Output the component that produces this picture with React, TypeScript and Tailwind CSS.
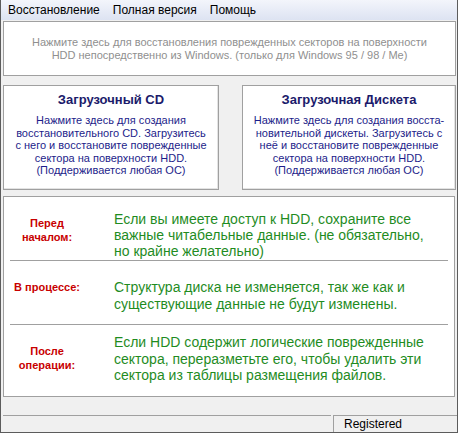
const FONT = { fontFamily: '"Liberation Sans", Arial, sans-serif' }

const MENU = ['Восстановление', 'Полная версия', 'Помощь']

function BootBox({ title, lines }: { title: string; lines: string[] }) {
  return (
    <div className="flex h-[105px] flex-col items-center border border-[#a0a0a0] bg-white shadow-[inset_-1px_-1px_0_#e3e3e3]">
      <div className="mt-[6px] text-[13px] font-bold leading-[16px] text-[#1b1b6b]">{title}</div>
      <div className="mt-[6px] text-center text-[11px] leading-[12.6px] text-[#1d1d8a]">
        {lines.map((l) => (
          <div key={l}>{l}</div>
        ))}
      </div>
    </div>
  )
}

function Row({
  label,
  text,
  textTop,
  height,
}: {
  label: string[]
  text: string[]
  textTop: string
  height: string
}) {
  return (
    <div className={`flex items-start ${height}`}>
      <div className="w-[86px] pt-[19px] text-center text-[11px] font-bold leading-[14px] text-[#c80000]">
        {label.map((l) => (
          <div key={l}>{l}</div>
        ))}
      </div>
      <div className={`ml-[24px] whitespace-nowrap text-[14px] text-[#1f8c1f] ${textTop}`}>
        {text.map((l) => (
          <div key={l}>{l}</div>
        ))}
      </div>
    </div>
  )
}

export default function App() {
  return (
    <div className="h-[433px] w-[460px] bg-white" style={FONT}>
      <div className="flex h-[433px] w-[458px] flex-col border-x border-b border-[#5c5c5c] bg-[#f0f0f0]">
        <div className="flex h-[20px] items-center bg-gradient-to-b from-[#f3f5fb] to-[#dde3f2] pl-[7px] text-[12px] text-black">
          {MENU.map((m) => (
            <span key={m} className="mr-[13px]">
              {m}
            </span>
          ))}
        </div>

        <div className="ml-[2px] mr-[1px] mt-[1px] flex h-[55px] flex-col items-center justify-center border border-[#a0a0a0] bg-white text-center text-[11px] leading-[13px] text-[#8f8f8f]">
          <div>Нажмите здесь для восстановления поврежденных секторов на поверхности</div>
          <div>HDD непосредственно из Windows. (только для Windows 95 / 98 / Me)</div>
        </div>

        <div className="ml-[2px] mr-[1px] mt-[9px] grid grid-cols-[216px_214px] justify-between">
          <BootBox
            title="Загрузочный CD"
            lines={[
              'Нажмите здесь для создания',
              'восстановительного CD. Загрузитесь',
              'с него и восстановите поврежденные',
              'сектора на поверхности HDD.',
              '(Поддерживается любая ОС)',
            ]}
          />
          <BootBox
            title="Загрузочная Дискета"
            lines={[
              'Нажмите здесь для создания восста-',
              'новительной дискеты. Загрузитесь с',
              'неё и восстановите поврежденные',
              'сектора на поверхности HDD.',
              '(Поддерживается любая ОС)',
            ]}
          />
        </div>

        <div className="ml-[2px] mr-[2px] mt-[6px] flex h-[201px] flex-col border border-[#a0a0a0] bg-white">
          <Row
            label={['Перед', 'началом:']}
            text={[
              'Если вы имеете доступ к HDD, сохраните все',
              'важные читабельные данные. (не обязательно,',
              'но крайне желательно)',
            ]}
            textTop="pt-[14px] leading-[16px]"
            height="h-[63px]"
          />
          <div className="mx-[6px] h-px bg-[#a0a0a0]" />
          <Row
            label={['В процессе:']}
            text={['Структура диска не изменяется, так же как и', 'существующие данные не будут изменены.']}
            textTop="pt-[18px] leading-[16.5px]"
            height="h-[63px]"
          />
          <div className="mx-[6px] h-px bg-[#a0a0a0]" />
          <Row
            label={['После', 'операции:']}
            text={[
              'Если HDD содержит логические поврежденные',
              'сектора, переразметьте его, чтобы удалить эти',
              'сектора из таблицы размещения файлов.',
            ]}
            textTop="pt-[9px] leading-[16.5px]"
            height="h-[71px]"
          />
        </div>

        <div className="mt-auto flex h-[17px] text-[12px] text-black">
          <div className="ml-[2px] flex-1 border-t border-[#a0a0a0]" />
          <div className="ml-[2px] w-[124px] border-l border-t border-[#a0a0a0] pl-[10px] leading-[16px]">
            Registered
          </div>
        </div>
      </div>
    </div>
  )
}
